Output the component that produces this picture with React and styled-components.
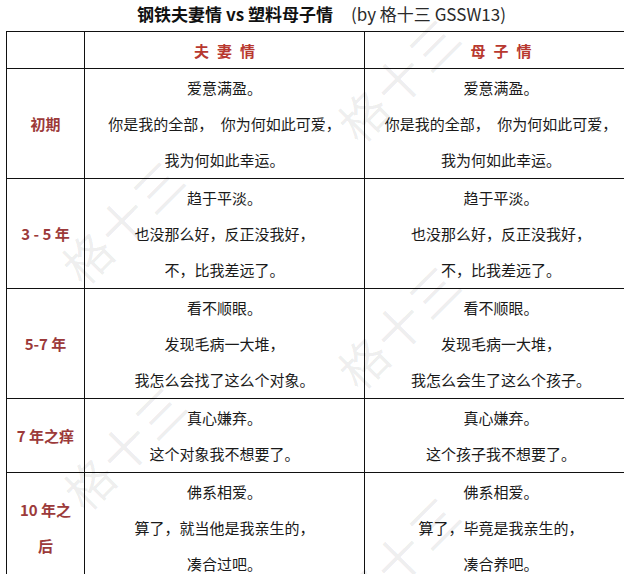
import React from "react";
import styled, { createGlobalStyle } from "styled-components";

const Global = createGlobalStyle`
  html, body { margin: 0; padding: 0; background: #fff; }
  body { width: 624px; height: 574px; overflow: hidden; font-family: "Noto Sans CJK SC", "Noto Sans", sans-serif; }
`;

const Page = styled.div`
  position: relative;
  width: 624px;
  height: 574px;
  overflow: hidden;
  background: #fff;
`;

const Sheet = styled.div`
  width: 631px;
  margin-left: 6px;
`;

const Title = styled.div`
  height: 31px;
  line-height: 28px;
  text-align: center;
  font-size: 17px;
  color: #111;
  white-space: nowrap;
`;

const TitleMain = styled.span`
  font-weight: 700;
`;

const TitleBy = styled.span`
  font-weight: 400;
  color: #2a2a2a;
  margin-left: 18px;
`;

const Grid = styled.div`
  display: grid;
  grid-template-columns: 78px 280px 273px;
  border-top: 1px solid #111;
  border-left: 1px solid #111;
`;

const Cell = styled.div`
  border-right: 1px solid #111;
  border-bottom: 1px solid #111;
  display: flex;
  flex-direction: column;
  align-items: center;
  justify-content: center;
  text-align: center;
`;

const HeadCell = styled(Cell)`
  height: 37px;
  font-size: 15px;
  font-weight: 700;
  color: #b8382f;
  letter-spacing: 8px;
  padding-left: 8px;
  box-sizing: border-box;
`;

const LabelCell = styled(Cell)`
  font-size: 15px;
  font-weight: 700;
  color: #9c3a3a;
  line-height: 36px;
  padding: 0 6px;
`;

const TextCell = styled(Cell)`
  padding-top: 1px;
  font-size: 15px;
  line-height: 36px;
  color: #1a1a1a;
  white-space: nowrap;
`;

const Line = styled.div``;

const Mark = styled.div`
  position: absolute;
  left: ${(p) => p.x}px;
  top: ${(p) => p.y}px;
  transform: translate(-50%, -50%) rotate(-45deg);
  font-size: 48px;
  font-weight: 400;
  color: rgba(0, 0, 0, 0.075);
  letter-spacing: 2px;
  white-space: nowrap;
  pointer-events: none;
`;

const rows = [
  {
    label: "初期",
    a: ["爱意满盈。", "你是我的全部，\u3000你为何如此可爱，", "我为何如此幸运。"],
    b: ["爱意满盈。", "你是我的全部，\u3000你为何如此可爱，", "我为何如此幸运。"],
  },
  {
    label: "3 - 5 年",
    a: ["趋于平淡。", "也没那么好，反正没我好，", "不，比我差远了。"],
    b: ["趋于平淡。", "也没那么好，反正没我好，", "不，比我差远了。"],
  },
  {
    label: "5-7 年",
    a: ["看不顺眼。", "发现毛病一大堆，", "我怎么会找了这么个对象。"],
    b: ["看不顺眼。", "发现毛病一大堆，", "我怎么会生了这么个孩子。"],
  },
  {
    label: "7 年之痒",
    a: ["真心嫌弃。", "这个对象我不想要了。"],
    b: ["真心嫌弃。", "这个孩子我不想要了。"],
  },
  {
    label: "10 年之后",
    a: ["佛系相爱。", "算了，就当他是我亲生的，", "凑合过吧。"],
    b: ["佛系相爱。", "算了，毕竟是我亲生的，", "凑合养吧。"],
  },
];

const marks = [
  { x: 398, y: 78 },
  { x: 122, y: 220 },
  { x: 398, y: 325 },
  { x: 124, y: 446 },
  { x: 398, y: 556 },
];

export default function App() {
  return (
    <Page>
      <Global />
      <Sheet>
        <Title>
          <TitleMain>钢铁夫妻情 vs 塑料母子情</TitleMain>
          <TitleBy>(by 格十三 GSSW13)</TitleBy>
        </Title>
        <Grid>
          <HeadCell />
          <HeadCell>夫妻情</HeadCell>
          <HeadCell>母子情</HeadCell>
          {rows.map((r) => (
            <React.Fragment key={r.label}>
              <LabelCell>{r.label}</LabelCell>
              <TextCell>
                {r.a.map((t, i) => (
                  <Line key={i}>{t}</Line>
                ))}
              </TextCell>
              <TextCell>
                {r.b.map((t, i) => (
                  <Line key={i}>{t}</Line>
                ))}
              </TextCell>
            </React.Fragment>
          ))}
        </Grid>
      </Sheet>
      {marks.map((m, i) => (
        <Mark key={i} x={m.x} y={m.y}>
          格十三
        </Mark>
      ))}
    </Page>
  );
}
